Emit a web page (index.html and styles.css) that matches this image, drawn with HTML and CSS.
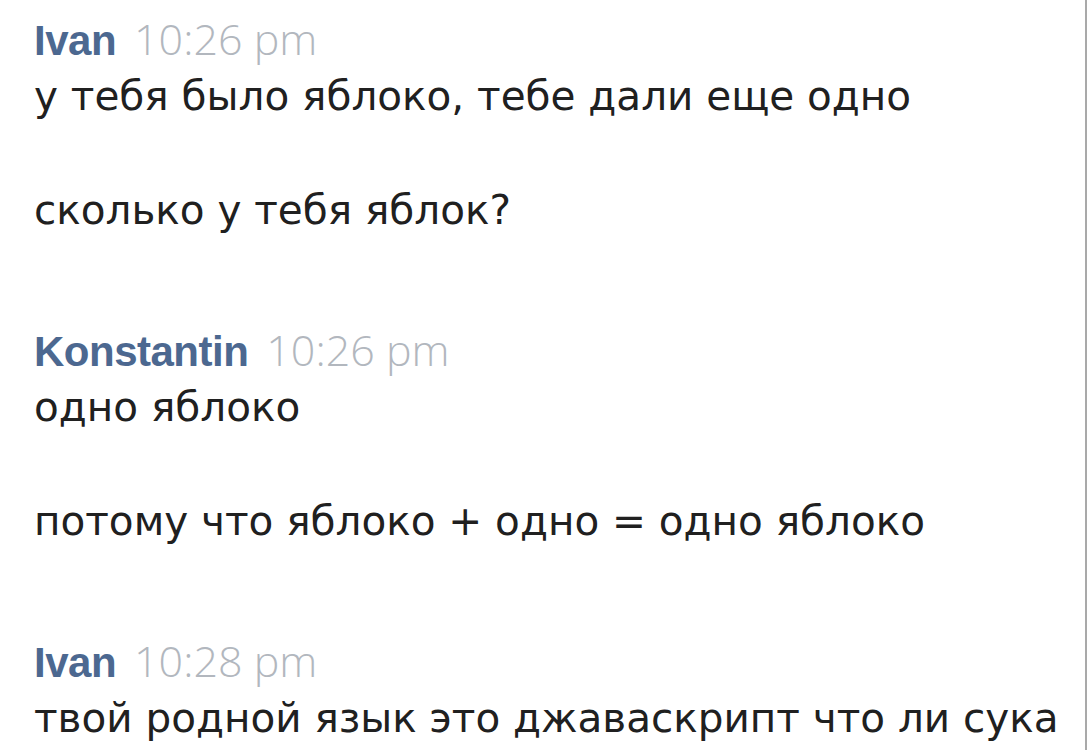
FILE: index.html
```html
<!DOCTYPE html>
<html lang="ru">
<head>
<meta charset="utf-8">
<link rel="stylesheet" href="styles.css">
</head>
<body>
<div class="chat">
  <div class="msg">
    <div class="head"><span class="name">Ivan</span><span class="time">10:26 pm</span></div>
    <div class="text">
      <p>у тебя было яблоко, тебе дали еще одно</p>
      <p class="blank">&nbsp;</p>
      <p>сколько у тебя яблок?</p>
    </div>
  </div>
  <div class="msg">
    <div class="head"><span class="name">Konstantin</span><span class="time">10:26 pm</span></div>
    <div class="text">
      <p>одно яблоко</p>
      <p class="blank">&nbsp;</p>
      <p>потому что яблоко + одно = одно яблоко</p>
    </div>
  </div>
  <div class="msg">
    <div class="head"><span class="name">Ivan</span><span class="time">10:28 pm</span></div>
    <div class="text">
      <p>твой родной язык это джаваскрипт что ли сука</p>
    </div>
  </div>
</div>
</body>
</html>
```
FILE: styles.css
```css
html, body {
  margin: 0;
  padding: 0;
  background: #ffffff;
}
.chat {
  box-sizing: border-box;
  width: 1087px;
  height: 750px;
  overflow: hidden;
  padding: 10px 0 0 34px;
  border-right: 2px solid #a9a9a9;
  display: flex;
  flex-direction: column;
  gap: 82px;
}
.head {
  display: flex;
  align-items: baseline;
  gap: 18px;
  height: 58px;
  line-height: 58px;
}
.name {
  font-family: "Liberation Sans", Arial, sans-serif;
  font-weight: bold;
  font-size: 42px;
  letter-spacing: -0.5px;
  color: #4c6890;
}
.time {
  font-family: "Open Sans", "Liberation Sans", sans-serif;
  font-weight: 300;
  font-size: 43px;
  color: #b2b7be;
}
.text {
  font-family: "DejaVu Sans", Verdana, sans-serif;
  font-size: 40.5px;
  line-height: 57px;
  color: #202020;
}
.text p {
  margin: 0;
  white-space: nowrap;
}
```
